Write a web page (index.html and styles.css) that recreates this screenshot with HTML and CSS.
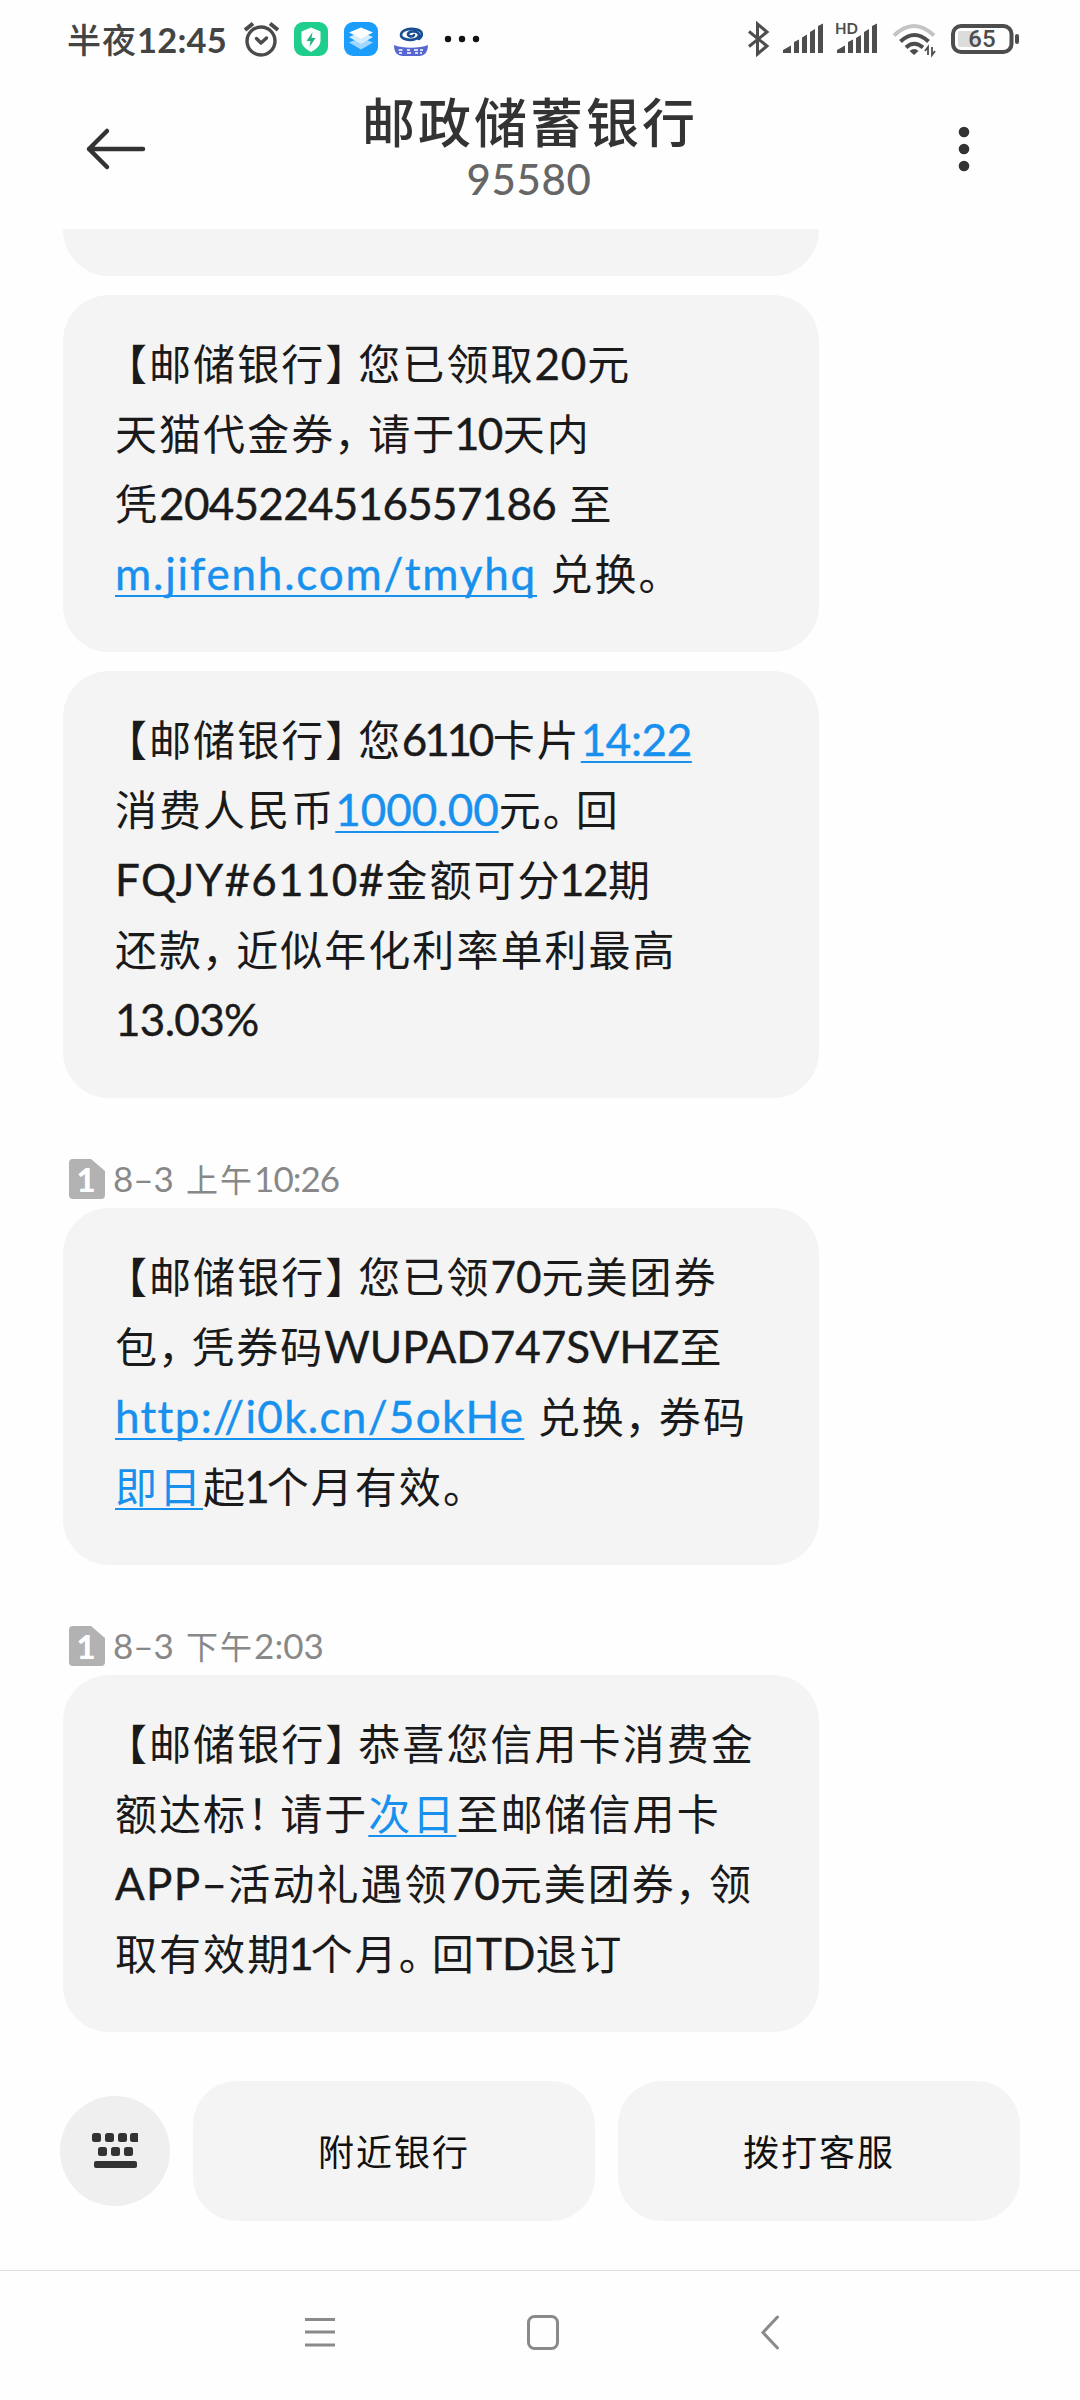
FILE: index.html
```html
<!DOCTYPE html>
<html lang="zh-CN">
<head>
<meta charset="utf-8">
<title>邮政储蓄银行</title>
<link rel="stylesheet" href="styles.css">
</head>
<body>
<div class="screen">
  <div class="status">
    <div class="clock">半夜<span class="clock-num">12:45</span></div>
    <svg class="status-left" width="300" height="60" viewBox="0 0 300 60">
      <g fill="none" stroke="#4a4a4a" stroke-width="3.4" stroke-linecap="round" stroke-linejoin="round">
        <circle cx="31" cy="31" r="14"/><path d="M26.500 28.500l4.500 4.500 5.500-5"/><path d="M15 20l8-6.500M40 13.500l8 6.500" stroke-width="4" stroke-linecap="butt"/>
      </g>
      <rect x="64" y="12" width="34" height="34" rx="9" fill="#1fce8d"/>
      <path d="M81 17.500l9.500 4v9c0 5-4 8.500-9.500 11.500-5.500-3-9.500-6.500-9.500-11.500v-9z" fill="#fff"/>
      <path d="M82.500 22l-6 9h4l-1 6 6-9h-4z" fill="#1fb57e"/>
      <rect x="114" y="12" width="34" height="34" rx="9" fill="#1b9dfb"/>
      <path d="M131 27.500l12 5-12 7-12-7z" fill="#9fd7ff"/><path d="M131 22l12 5-12 7-12-7z" fill="#d5edff"/><path d="M131 17.500l12 5-12 6-12-6z" fill="#fff"/>
      <path d="M189 29c4-3 4-8-2-9.500-8-2-16 1-16 5.500 0 6 17 7 18 0 .5-4-10-5-11-1-.6 2.600 5 3.400 6 1" fill="none" stroke="#174f91" stroke-linecap="round" stroke-width="2.600"/>
      <path d="M164 35c8 3.500 26 3.500 34 0-.3 7-3 11-9 11h-16c-6 0-9-4-9-11z" fill="#5667d2"/>
      <path d="M168.500 40h4M169 43h3M177 40h3M177 43h4M184 40h4M185 43h3M190 40h3M190 43h2" stroke="#fff" stroke-width="1.700"/>
      <g fill="#111"><circle cx="218" cy="29" r="3.200"/><circle cx="232" cy="29" r="3.200"/><circle cx="246" cy="29" r="3.200"/></g>
    </svg>
    <svg class="status-right" width="320" height="60" viewBox="0 0 320 60">
      <path d="M29 21.500l18 14.500-9.500 8V14l9.500 8-18 14.500" fill="none" stroke="#4d4d4d" stroke-width="3"/>
      <path d="M63 43v-3l8-4.500v7.500zM74 43v-11l5-2.500v13.500zM82 43V27.500l5-3V43zM90 43V22l5-3v24zM98 43V16l5-2.500v29.500z" fill="#4d4d4d"/>
      <path d="M117 43v-3l8-4.500v7.500zM128 43v-11l5-2.500v13.500zM136 43V28l5-3V43zM144 43V22l5-3v24zM152 43V16l5-2.500v29.500z" fill="#4d4d4d"/>
      <text x="115" y="24" class="hd">HD</text>
      <g fill="none" stroke="#4d4d4d" stroke-width="4"><path d="M174 25.500q20-19 40 0" stroke="#c4c4c4"/><path d="M180.500 31.500q14-13 28 0"/><path d="M186 37.500q8-7.500 17 0"/></g>
      <path d="M189.500 41q5-4 9 0l-4.500 4z" fill="#4d4d4d"/>
      <path d="M208 45V37l-3 4M212 37v8l3-4" fill="none" stroke="#4d4d4d" stroke-width="1.800"/>
      <rect x="233" y="16" width="58.500" height="26" rx="8" fill="none" stroke="#4d4d4d" stroke-width="4"/>
      <rect x="238" y="21" width="20" height="16" rx="2" fill="#dcdcdc"/>
      <rect x="295" y="24" width="4" height="10" rx="2" fill="#4d4d4d"/>
      <text x="262" y="37" class="batt">65</text>
    </svg>
  </div>
  <header class="header">
    <svg class="back" width="64" height="48" viewBox="0 0 64 48"><path d="M59 24H5M23 6L5 24l18 18" fill="none" stroke="#333" stroke-width="4.500" stroke-linecap="round" stroke-linejoin="round"/></svg>
    <div class="titles"><h1>邮政储蓄银行</h1><div class="number">95580</div></div>
    <svg class="more" width="20" height="48" viewBox="0 0 20 48" fill="#333"><circle cx="10" cy="7" r="5.300"/><circle cx="10" cy="24" r="5.300"/><circle cx="10" cy="41" r="5.300"/></svg>
  </header>
  <main class="thread">
    <div class="bubble cut"></div>
    <div class="bubble">
      <p><i class="po">【</i>邮储银行<i class="pc">】</i>您已领取<b class="wide-1">20</b>元</p>
      <p>天猫代金券<i class="pm">，</i>请于<b class="tight-2">10</b>天内</p>
      <p>凭<b class="tight-1">2045224516557186</b><b class="sp"> </b>至</p>
      <p><a><b class="wide-3">m.jifenh.com/tmyhq</b></a><b class="sp"> </b>兑换<i class="pc">。</i></p>
    </div>
    <div class="bubble">
      <p><i class="po">【</i>邮储银行<i class="pc">】</i>您<b class="tight-3">6110</b>卡片<a><b class="tight-0">14:22</b></a></p>
      <p>消费人民币<a><b>1000.00</b></a>元<i class="pc">。</i>回</p>
      <p><b class="wide-2">FQJY#6110#</b>金额可分<b class="tight-2">12</b>期</p>
      <p>还款<i class="pm">，</i>近似年化利率单利最高</p>
      <p><b class="tight-1">13.03%</b></p>
    </div>
    <div class="stamp"><svg width="36" height="40" viewBox="0 0 36 40"><path d="M4 0h18l14 12v24a4 4 0 0 1-4 4H4a4 4 0 0 1-4-4V4a4 4 0 0 1 4-4z" fill="#b2b2b2"/><text x="18" y="33" class="sim">1</text></svg><span><b>8–3</b> 上午<b class="tight-1">10:26</b></span></div>
    <div class="bubble">
      <p><i class="po">【</i>邮储银行<i class="pc">】</i>您已领<b>70</b>元美团券</p>
      <p>包<i class="pm">，</i>凭券码<b>WUPAD747SVHZ</b>至</p>
      <p><a><b class="wide-2">http://i0k.cn/5okHe</b></a><b class="sp"> </b>兑换<i class="pm">，</i>券码</p>
      <p><a>即日</a>起<b class="one">1</b>个月有效<i class="pc">。</i></p>
    </div>
    <div class="stamp"><svg width="36" height="40" viewBox="0 0 36 40"><path d="M4 0h18l14 12v24a4 4 0 0 1-4 4H4a4 4 0 0 1-4-4V4a4 4 0 0 1 4-4z" fill="#b2b2b2"/><text x="18" y="33" class="sim">1</text></svg><span><b>8–3</b> 下午<b>2:03</b></span></div>
    <div class="bubble">
      <p><i class="po">【</i>邮储银行<i class="pc">】</i>恭喜您信用卡消费金</p>
      <p>额达标<i class="pc">！</i>请于<a>次日</a>至邮储信用卡</p>
      <p><b class="wide-2">APP–</b>活动礼遇领<b>70</b>元美团券<i class="pm">，</i>领</p>
      <p>取有效期<b class="one">1</b>个月<i class="pc">。</i>回<b>TD</b>退订</p>
    </div>
  </main>
  <div class="actions">
    <div class="kbd"><svg width="46" height="36" viewBox="0 0 46 36" fill="#333"><rect x="0" y="0" width="9" height="9" rx="2.500"/><rect x="13" y="0" width="9" height="9" rx="2.500"/><rect x="26" y="0" width="9" height="9" rx="2.500"/><rect x="38" y="0" width="9" height="9" rx="2.500"/><rect x="6" y="14" width="9" height="9" rx="2.500"/><rect x="19" y="14" width="9" height="9" rx="2.500"/><rect x="32" y="14" width="9" height="9" rx="2.500"/><rect x="2" y="28" width="43" height="7" rx="2"/></svg></div>
    <div class="btn">附近银行</div>
    <div class="btn">拨打客服</div>
  </div>
  <nav class="nav">
    <svg width="40" height="40" viewBox="0 0 40 40"><path d="M5 7.500h30M5 20h30M5 33h30" stroke="#8a8a8a" stroke-width="3"/></svg>
    <svg width="40" height="40" viewBox="0 0 40 40"><rect x="5.500" y="4.500" width="29" height="32" rx="6" fill="none" stroke="#8a8a8a" stroke-width="3"/></svg>
    <svg width="40" height="40" viewBox="0 0 40 40"><path d="M31.500 5L17 20.500 31.500 36" fill="none" stroke="#8a8a8a" stroke-width="3" stroke-linecap="round"/></svg>
  </nav>
</div>
</body>
</html>
```
FILE: styles.css
```css
* { box-sizing: border-box; margin: 0; padding: 0; }
body { background: #fefefe; font-family: "Noto Sans CJK SC", sans-serif; }
b { font-weight: inherit; font-family: Lato, "Noto Sans CJK SC", sans-serif; font-size: 44px; letter-spacing: 0; }
i { font-style: normal; }
.screen { width: 1080px; height: 2400px; display: flex; flex-direction: column; overflow: hidden; }

/* Status bar */
.status { height: 80px; padding: 0 40px 0 67px; display: flex; flex: none; }
.clock { width: 163px; font-size: 34px; font-weight: 500; letter-spacing: 1px; line-height: 78px; color: #444; white-space: nowrap; }
.clock-num { font-family: Lato, sans-serif; font-weight: 700; font-size: 34.5px; letter-spacing: 0.2px; }
.status-left { margin-top: 10px; }
.status-right { margin: 10px 0 0 190px; flex: none; }
.hd { font: 700 15px Lato, sans-serif; fill: #4d4d4d; }
.batt, .sim { text-anchor: middle; }
.batt { font: 500 24px Roboto, sans-serif; fill: #4d4d4d; }
.sim { font: 900 33px Lato, sans-serif; fill: #fff; }

/* Title bar */
.header { height: 149px; flex: none; display: flex; justify-content: space-between; padding: 0 106px 0 84px; }
.back, .more { margin-top: 45px; }
.titles { text-align: center; margin-right: 42px; }
.titles h1 { font-size: 53px; font-weight: 500; letter-spacing: 3px; line-height: 80px; color: #333; }
.number { font: 500 42px/38px Lato, sans-serif; letter-spacing: 0.6px; margin-left: -2px; color: #666; }

/* Messages */
.thread { padding-left: 63px; height: 1837px; flex: none; }
.bubble { width: 756px; background: #f4f4f4; border-radius: 46px; padding: 32px 52px 45px; margin-bottom: 19px; }
.cut { height: 47px; padding: 0; border-radius: 0 0 46px 46px; }
.bubble p { font-size: 42px; letter-spacing: 2.05px; line-height: 70px; height: 70px; color: #1a1a1a; white-space: pre; text-spacing-trim: space-all; }
.bubble p b { -webkit-text-stroke: 0.4px currentColor; }
.bubble a { color: #1890ee; text-decoration: underline; text-decoration-thickness: 2px; text-underline-offset: 5px; text-decoration-skip-ink: none; }
.po { margin-left: -10px; }
.pc { letter-spacing: -9px; }
.pm { margin-left: -1px; letter-spacing: -8px; }

/* Tracking for Latin runs */
.sp { letter-spacing: 2.1px; }
.wide-1 { letter-spacing: 0.8px; }
.wide-2 { letter-spacing: 1.3px; }
.wide-3 { letter-spacing: 1.8px; }
.tight-0 { letter-spacing: -0.4px; }
.tight-1 { letter-spacing: -0.7px; }
.tight-2 { margin: 0 1px 0 -2.5px; letter-spacing: -1.6px; }
.tight-3 { margin: 0 1.5px 0 -0.5px; letter-spacing: -3.2px; }
.one { margin-left: -3px; letter-spacing: -3px; }

.stamp { margin-top: -19px; padding: 61px 0 0 6px; height: 110px; display: flex; gap: 8px; font-size: 32px; letter-spacing: 2px; line-height: 39px; color: #888; white-space: pre; }
.stamp b { font-size: 35px; }
.stamp b:first-child { margin-right: 3px; }
.stamp .tight-1 { letter-spacing: -1px; }

/* Quick actions */
.actions { height: 204px; flex: none; display: flex; align-items: flex-start; padding: 15px 60px 0; gap: 23px; }
.kbd { width: 110px; height: 110px; margin-top: 15px; border-radius: 50%; background: #efefef; display: flex; align-items: center; justify-content: center; flex: none; }
.btn { flex: 1; height: 140px; border-radius: 44px; background: #f4f4f4; display: flex; align-items: center; justify-content: center; padding-bottom: 2px; font-size: 36px; letter-spacing: 2px; color: #111; }

/* System navigation */
.nav { flex: 1; border-top: 1px solid #dedede; display: flex; padding: 41px 0 0 300px; gap: 183px; }
```
